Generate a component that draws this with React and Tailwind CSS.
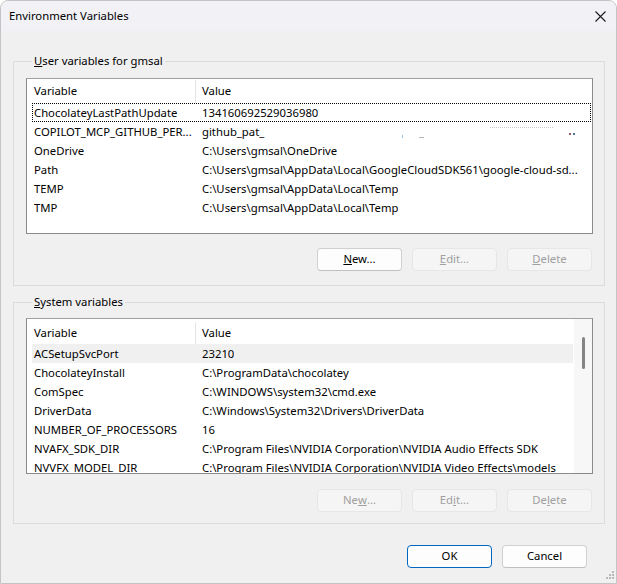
import React from "react";

const USER_VARS = [
  ["ChocolateyLastPathUpdate", "134160692529036980"],
  ["COPILOT_MCP_GITHUB_PER...", "github_pat_"],
  ["OneDrive", "C:\\Users\\gmsal\\OneDrive"],
  ["Path", "C:\\Users\\gmsal\\AppData\\Local\\GoogleCloudSDK561\\google-cloud-sd..."],
  ["TEMP", "C:\\Users\\gmsal\\AppData\\Local\\Temp"],
  ["TMP", "C:\\Users\\gmsal\\AppData\\Local\\Temp"],
];

const SYSTEM_VARS = [
  ["ACSetupSvcPort", "23210"],
  ["ChocolateyInstall", "C:\\ProgramData\\chocolatey"],
  ["ComSpec", "C:\\WINDOWS\\system32\\cmd.exe"],
  ["DriverData", "C:\\Windows\\System32\\Drivers\\DriverData"],
  ["NUMBER_OF_PROCESSORS", "16"],
  ["NVAFX_SDK_DIR", "C:\\Program Files\\NVIDIA Corporation\\NVIDIA Audio Effects SDK"],
  ["NVVFX_MODEL_DIR", "C:\\Program Files\\NVIDIA Corporation\\NVIDIA Video Effects\\models"],
];

// blurred-out token specks after "github_pat_"
const Specks = () => (
  <span className="inline-flex items-center h-[17px]">
    <span className="inline-block w-[1px] h-[3px] bg-[#8fc4ef] ml-[138px] mt-[8px]" />
    <span className="inline-block w-[5px] h-[1px] bg-[#b5b5b5] ml-[16px] mt-[10px]" />
    <span className="inline-block w-[63px] h-[1px] ml-[66px] -mt-[10px] border-t border-dotted border-[#c8c8c8]" />
    <span className="inline-block w-[2px] h-[2px] bg-[#9a5a6a] ml-[16px] mt-[4px]" />
    <span className="inline-block w-[2px] h-[2px] bg-[#5a6a9a] ml-[2px] mt-[4px]" />
  </span>
);

const Header = ({ tall }) => (
  <div className={`flex ${tall ? "h-[25px] pt-[3px]" : "h-[24px] pt-[1px]"} items-center bg-white shrink-0`}>
    <div className="w-[169px] h-full flex items-center pl-[7px] border-r border-[#e5e5e5]">Variable</div>
    <div className="pl-[6px]">Value</div>
  </div>
);

const Row = ({ name, value, focused, selected, specks }) => (
  <div
    className={`flex h-[19px] shrink-0 items-center pt-[1px] ml-[5px] mr-[1px] border ${
      focused ? "border-dotted border-black" : "border-transparent"
    } ${selected ? "bg-[#f0f0f0]" : ""}`}
  >
    <div className="w-[164px] pl-[1px] whitespace-nowrap overflow-hidden">{name}</div>
    <div className="pl-[5px] whitespace-nowrap overflow-hidden flex items-center">
      {value}
      {specks && <Specks />}
    </div>
  </div>
);

const Btn = ({ children, disabled, primary }) => (
  <div
    className={`w-[85px] h-[23px] flex items-center justify-center rounded-[4px] border ${
      disabled
        ? "bg-[#f5f5f5] border-[#e6e6e6] text-[#a0a0a0]"
        : primary
        ? "bg-[#fdfdfd] border-[#0067c0]"
        : "bg-[#fdfdfd] border-[#d0d0d0] border-b-[#c0c0c0]"
    }`}
  >
    {children}
  </div>
);

const GroupBox = ({ legend, children, className }) => (
  <fieldset className={`border border-[#dcdcdc] pl-[12px] pr-[11px] ${className}`}>
    <legend className="ml-[6px] px-[2px] leading-[16px]">{legend}</legend>
    {children}
  </fieldset>
);

export default function App() {
  return (
    <div className="w-[617px] h-[584px] relative flex flex-col bg-[#f0f0f0] border border-[#c4c4c4] rounded-t-[8px] overflow-hidden text-black text-[11.3px] font-['Segoe_UI','Noto_Sans',sans-serif]">
      {/* Title bar */}
      <div className="h-[30px] shrink-0 flex items-center justify-between pl-[8px] pr-[9px] bg-[#f1f1f6]">
        <span>Environment Variables</span>
        <svg width="11" height="11" viewBox="0 0 11 11" className="mr-[1px]">
          <path d="M0.5 0.5 L10.5 10.5 M10.5 0.5 L0.5 10.5" stroke="#1a1a1a" strokeWidth="1.1" />
        </svg>
      </div>

      <div className="flex flex-col pl-[12px] pr-[11px]">
        {/* User variables */}
        <GroupBox
          className="mt-[22px] pb-[14px]"
          legend={
            <>
              <span className="underline">U</span>ser variables for gmsal
            </>
          }
        >
          <div className="mt-[9px] h-[156px] bg-white border border-[#8a8a8a] border-t-[#a0a0a0] flex flex-col overflow-hidden">
            <Header />
            {USER_VARS.map(([n, v], i) => (
              <Row key={n} name={n} value={v} focused={i === 0} specks={i === 1} />
            ))}
          </div>
          <div className="mt-[14px] mr-[1px] flex justify-end gap-[10px]">
            <Btn>
              <span className="underline">N</span>ew...
            </Btn>
            <Btn disabled>
              <span className="underline">E</span>dit...
            </Btn>
            <Btn disabled>
              <span className="underline">D</span>elete
            </Btn>
          </div>
        </GroupBox>

        {/* System variables */}
        <GroupBox
          className="mt-[8px] pb-[11px]"
          legend={
            <>
              <span className="underline">S</span>ystem variables
            </>
          }
        >
          <div className="mt-[8px] h-[156px] bg-white border border-[#8a8a8a] border-t-[#a0a0a0] flex overflow-hidden">
            <div className="flex-1 flex flex-col overflow-hidden">
              <Header tall />
              {SYSTEM_VARS.map(([n, v], i) => (
                <Row key={n} name={n} value={v} selected={i === 0} />
              ))}
            </div>
            <div className="w-[18px] shrink-0 bg-[#f7f7f7] flex justify-center">
              <div className="w-[3px] h-[32px] mt-[18px] rounded-full bg-[#858585]" />
            </div>
          </div>
          <div className="mt-[15px] mr-[1px] flex justify-end gap-[10px]">
            <Btn disabled>
              Ne<span className="underline">w</span>...
            </Btn>
            <Btn disabled>
              Ed<span className="underline">i</span>t...
            </Btn>
            <Btn disabled>
              De<span className="underline">l</span>ete
            </Btn>
          </div>
        </GroupBox>

        {/* Dialog buttons */}
        <div className="mt-[21px] mr-[18px] flex justify-end gap-[10px]">
          <Btn primary>OK</Btn>
          <Btn>Cancel</Btn>
        </div>
      </div>

      {/* resize grip */}
      <svg width="12" height="12" viewBox="0 0 12 12" className="absolute right-[1px] bottom-[1px]">
        {[
          [9, 1],
          [6, 4],
          [9, 4],
          [3, 7],
          [6, 7],
          [9, 7],
        ].map(([x, y]) => (
          <rect key={`${x}-${y}`} x={x} y={y} width="2" height="2" fill="#b8b8b8" />
        ))}
      </svg>
    </div>
  );
}
